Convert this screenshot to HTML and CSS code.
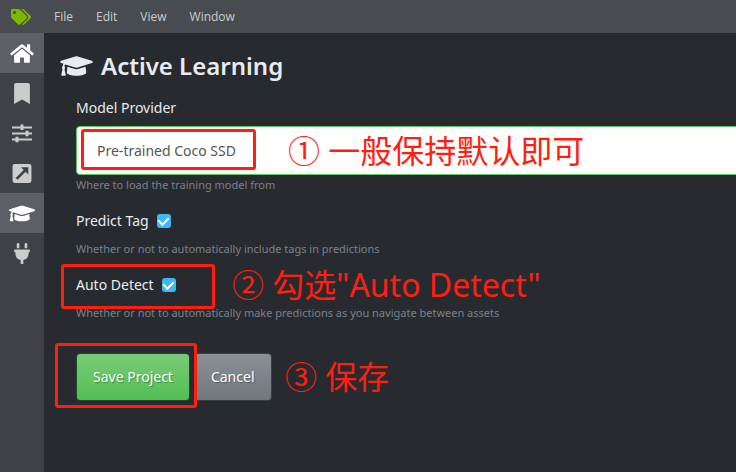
FILE: index.html
```html
<!DOCTYPE html>
<html lang="en">
<head>
<meta charset="utf-8">
<meta name="viewport" content="width=device-width, initial-scale=1">
<title>Active Learning</title>
<link rel="stylesheet" href="styles.css">
</head>
<body>
<svg class="symbols">
  <symbol id="cap" viewBox="0 0 640 512"><path d="M622.34 153.2L343.4 67.5c-15.2-4.67-31.6-4.67-46.79 0L17.66 153.2c-23.54 7.23-23.54 38.36 0 45.59l48.63 14.94c-10.67 13.19-17.23 29.28-17.88 46.9C38.78 266.15 32 276.11 32 288c0 10.78 5.68 19.85 13.86 25.65L20.33 428.53C18.11 438.52 25.71 448 35.94 448h56.11c10.24 0 17.84-9.48 15.62-19.47L82.14 313.65C90.32 307.85 96 298.78 96 288c0-11.57-6.47-21.25-15.66-26.87.76-15.02 8.44-28.3 20.69-36.72L296.6 284.5c9.06 2.78 26.44 6.25 46.79 0l278.95-85.7c23.55-7.24 23.55-38.36 0-45.6zM352.79 315.09c-28.53 8.76-52.84 3.92-65.59 0l-145.02-44.55L128 384c0 35.35 85.96 64 192 64s192-28.65 192-64l-14.18-113.47-145.03 44.56z"/></symbol>
</svg>
<header class="menubar">
  <svg class="logo" viewBox="0 0 640 512" aria-hidden="true"><path d="M497.941 225.941L286.059 14.059A48 48 0 0 0 252.118 0H48C21.49 0 0 21.49 0 48v204.118a48 48 0 0 0 14.059 33.941l211.882 211.882c18.744 18.745 49.136 18.746 67.882 0l204.118-204.118c18.745-18.745 18.745-49.137 0-67.882zM112 160c-26.51 0-48-21.49-48-48s21.49-48 48-48 48 21.49 48 48-21.49 48-48 48zm513.941 133.823L421.823 497.941c-18.745 18.745-49.137 18.745-67.882 0l-.36-.36L527.64 323.522c16.999-16.999 26.36-39.6 26.36-63.64s-9.362-46.641-26.36-63.64L331.397 0h48.721a48 48 0 0 1 33.941 14.059l211.882 211.882c18.745 18.745 18.745 49.137 0 67.882z"/></svg>
  <nav class="menus">
    <button type="button">File</button>
    <button type="button">Edit</button>
    <button type="button">View</button>
    <button type="button">Window</button>
  </nav>
</header>
<div class="shell">
  <nav class="sidebar">
    <a class="active" href="#home" aria-label="Home"><svg class="home" viewBox="0 0 576 512"><path d="M280.37 148.26L96 300.11V464a16 16 0 0 0 16 16l112.06-.29a16 16 0 0 0 15.92-16V368a16 16 0 0 1 16-16h64a16 16 0 0 1 16 16v95.64a16 16 0 0 0 16 16.05L464 480a16 16 0 0 0 16-16V300L295.67 148.26a12.19 12.19 0 0 0-15.3 0zM571.6 251.47L488 182.56V44.05a12 12 0 0 0-12-12h-56a12 12 0 0 0-12 12v72.61L318.47 43a48 48 0 0 0-61 0L4.34 251.47a12 12 0 0 0-1.6 16.9l25.5 31A12 12 0 0 0 45.15 301l235.22-193.74a12.19 12.19 0 0 1 15.3 0L530.9 301a12 12 0 0 0 16.9-1.6l25.5-31a12 12 0 0 0-1.7-16.93z"/></svg></a>
    <a href="#tags" aria-label="Tags"><svg viewBox="0 0 384 512"><path d="M0 512V48C0 21.49 21.49 0 48 0h288c26.51 0 48 21.49 48 48v464L192 400 0 512z"/></svg></a>
    <a href="#settings" aria-label="Settings"><svg viewBox="0 0 22 20"><path d="M1 3h20v2H1zM1 9h20v2H1zM1 15h20v2H1zM9.500 1h3v5.500h-3zM14.500 7.200h3v5.500h-3zM4.500 13.200h3v5.500h-3z"/></svg></a>
    <a href="#export" aria-label="Export"><svg viewBox="0 0 20 20"><path fill-rule="evenodd" d="M3 1h14a2 2 0 0 1 2 2v14a2 2 0 0 1-2 2H3a2 2 0 0 1-2-2V3a2 2 0 0 1 2-2zM9 4l2.600 2.600-7.600 7.600 1.800 1.800 7.600-7.600L16 11V4z"/></svg></a>
    <a class="active" href="#learning" aria-label="Active Learning"><svg class="wide"><use href="#cap"/></svg></a>
    <a href="#connections" aria-label="Connections"><svg viewBox="0 0 384 512"><path d="M320,32a32,32,0,0,0-64,0v96h64Zm48,128H16A16,16,0,0,0,0,176v32a16,16,0,0,0,16,16H32v32A160.07,160.07,0,0,0,160,412.8V512h64V412.8A160.07,160.07,0,0,0,352,256V224h16a16,16,0,0,0,16-16V176A16,16,0,0,0,368,160ZM128,32a32,32,0,0,0-64,0v96h64Z"/></svg></a>
  </nav>
  <main class="page">
    <h1><svg aria-hidden="true"><use href="#cap"/></svg>Active Learning</h1>
    <form class="form">
      <div class="field provider">
        <label for="provider">Model Provider</label>
        <div class="control">
          <select id="provider"><option>Pre-trained Coco SSD</option></select>
          <div class="frame frame-select"></div>
          <p class="note note-select" lang="zh-CN">① 一般保持默认即可</p>
        </div>
        <small>Where to load the training model from</small>
      </div>
      <div class="field">
        <div class="check"><label for="tag">Predict Tag</label><input type="checkbox" id="tag" checked></div>
        <small>Whether or not to automatically include tags in predictions</small>
      </div>
      <div class="field">
        <div class="check"><label for="detect">Auto Detect</label><input type="checkbox" id="detect" checked></div>
        <small>Whether or not to automatically make predictions as you navigate between assets</small>
        <div class="frame frame-check"></div>
        <p class="note note-check" lang="zh-CN">② 勾选"Auto Detect"</p>
      </div>
      <div class="actions">
        <button type="submit" class="save">Save Project</button>
        <button type="button" class="cancel">Cancel</button>
        <div class="frame frame-save"></div>
        <p class="note note-save" lang="zh-CN">③ 保存</p>
      </div>
    </form>
  </main>
</div>
</body>
</html>
```
FILE: styles.css
```css
* { box-sizing: border-box; }
body {
  margin: 0;
  min-height: 100vh;
  display: flex;
  flex-direction: column;
  overflow: hidden;
  background: #272b30;
  color: #e9ecef;
  font: 14px/24px "Noto Sans", "Open Sans", sans-serif;
}
h1, p { margin: 0; }
button, select { font: inherit; }
.symbols { display: none; }

.menubar {
  display: flex;
  align-items: center;
  height: 33px;
  padding-left: 11px;
  background: #484b4f;
}
.logo { width: 20px; height: 16px; fill: #7db700; }
.menus { display: flex; gap: 3px; margin-left: 13px; }
.menus button {
  padding: 0 10px;
  border: 0;
  background: none;
  color: #ccc;
  font-family: "Open Sans", sans-serif;
  font-size: 12px;
}

.shell { display: flex; flex: 1; }
.sidebar { flex: none; width: 44px; background: #3e4145; }
.sidebar a {
  display: flex;
  align-items: center;
  justify-content: center;
  height: 40px;
  color: #ccc;
}
.sidebar a.active { background: #5c5f63; color: #fff; }
.sidebar svg { width: 22px; height: 21px; fill: currentColor; }
.sidebar .home { width: 24px; }
.sidebar .wide { width: 26px; }

.page { flex: 1; min-width: 0; padding: 17px 0 16px 16px; }
h1 {
  display: flex;
  align-items: center;
  gap: 8px;
  font-size: 24px;
  line-height: 32px;
  font-weight: 600;
}
h1 svg { width: 33px; height: 26px; fill: currentColor; }

.form { padding: 14px 0 0 16px; }
.field, .actions, .control { position: relative; }
.field { margin-bottom: 14px; }
.field > label { display: block; line-height: 24px; }
.field small {
  display: block;
  color: #7a8288;
  font-size: 11px;
  line-height: 20px;
}
.control { margin-top: 6px; }
select {
  display: block;
  width: calc(100% + 16px);
  height: 49px;
  padding: 0 20px;
  appearance: none;
  border: 1px solid #62c462;
  border-radius: 4px;
  background: #fff;
  color: #555;
}
.check { display: flex; align-items: center; gap: 8px; margin-bottom: 6px; }
.check input {
  display: grid;
  place-items: center;
  width: 14px;
  height: 14px;
  margin: 0;
  appearance: none;
  border-radius: 3px;
  background: #3db8f5;
}
.check input:checked::after {
  content: "";
  width: 5px;
  height: 8px;
  margin-bottom: 2px;
  border: solid #fff;
  border-width: 0 2px 2px 0;
  transform: rotate(45deg);
}

.actions { display: flex; gap: 4px; padding-top: 16px; }
.actions button {
  height: 48px;
  padding: 0 16px;
  border: 1px solid #24482a;
  border-radius: 4px;
  color: #fff;
  text-shadow: 1px 1px 1px rgba(0, 0, 0, 0.3);
}
.actions .save { background: linear-gradient(#78cc78, #53be53); }
.actions .cancel { border-color: #3a3f44; background: linear-gradient(#8a9196, #70787d); }

.frame {
  position: absolute;
  border: 3px solid #ff1e10;
  border-radius: 3px;
  pointer-events: none;
}
.frame-select { left: 5px; top: 3px; width: 175px; height: 41px; }
.frame-check { left: -15px; top: -9px; width: 154px; height: 45px; }
.frame-save { left: -21px; top: 6px; width: 142px; height: 65px; }

.note {
  position: absolute;
  color: #ff1e10;
  font: 32px/48px "Noto Sans", "Noto Sans CJK SC", sans-serif;
  white-space: nowrap;
}
.note-select { left: 212px; top: 1px; }
.note-check { left: 156px; top: -12px; }
.note-save { left: 209px; top: 16px; }
```
